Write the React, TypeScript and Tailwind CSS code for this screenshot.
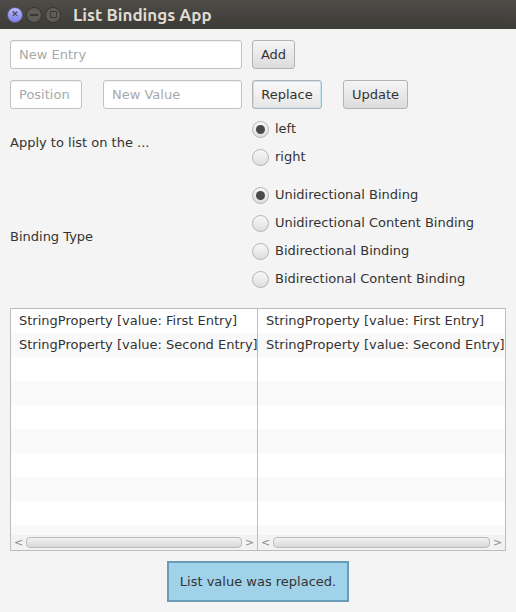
const rows = ["StringProperty [value: First Entry]", "StringProperty [value: Second Entry]"];

function Radio({ label, checked }: { label: string; checked?: boolean }) {
  return (
    <div className="flex h-[28px] items-center gap-[6px]">
      <div className="flex h-[17px] w-[17px] items-center justify-center rounded-full border border-[#b4b4b4] bg-gradient-to-b from-[#f8f8f8] to-[#dedede]">
        {checked && <div className="h-[9px] w-[9px] rounded-full bg-[#4a4a4a]" />}
      </div>
      <span>{label}</span>
    </div>
  );
}

function ListPane({ className }: { className: string }) {
  return (
    <div className={"flex h-full w-[248px] flex-col border border-[#bdbdbd] bg-white " + className}>
      <div className="flex-1 overflow-hidden">
        {Array.from({ length: 10 }).map((_, i) => (
          <div
            key={i}
            className={"h-[24px] overflow-hidden whitespace-nowrap pl-[8px] leading-[24px] " + (i % 2 ? "bg-[#f9f9f9]" : "bg-white")}
          >
            {rows[i] ?? ""}
          </div>
        ))}
      </div>
      <div className="flex h-[15px] items-center bg-[#f2f2f2] text-[#8a8a8a]">
        <span className="w-[15px] text-center text-[11px] leading-none">&lt;</span>
        <div className="h-[11px] flex-1 rounded-[4px] border border-[#bcbcbc] bg-gradient-to-b from-[#f2f2f2] to-[#d8d8d8]" />
        <span className="w-[15px] text-center text-[11px] leading-none">&gt;</span>
      </div>
    </div>
  );
}

const btn = "h-[29px] rounded-[3px] border border-[#b3b3b3] bg-gradient-to-b from-[#f5f5f5] to-[#dcdcdc] px-0 text-center";
const field = "h-[29px] rounded-[3px] border border-[#c2c2c2] bg-white px-[8px] shadow-[inset_0_1px_1px_rgba(0,0,0,0.06)] placeholder:text-[#a8a8a8] outline-none";

export default function App() {
  return (
    <div className="flex h-[612px] w-[516px] flex-col bg-[#f4f4f4] text-[13px] text-[#333] [font-family:'DejaVu_Sans',sans-serif]">
      <div className="flex h-[29px] items-center bg-gradient-to-b from-[#4d4c47] to-[#3c3b37] pl-[7px]">
        <div className="flex h-[16px] w-[16px] items-center justify-center rounded-full border border-[#5a5a8a] bg-gradient-to-b from-[#b8b8ff] to-[#8080e8] text-[9px] leading-none text-[#333]">
          ✕
        </div>
        <div className="ml-[3px] flex h-[16px] w-[16px] items-center justify-center rounded-full border border-[#35342f] bg-[#5d5c57]">
          <div className="h-[2px] w-[8px] bg-[#3a3935]" />
        </div>
        <div className="ml-[3px] flex h-[16px] w-[16px] items-center justify-center rounded-full border border-[#35342f] bg-[#5d5c57]">
          <div className="h-[7px] w-[7px] border border-[#3a3935]" />
        </div>
        <span className="ml-[12px] text-[17px] font-bold text-[#dfdbd2] [font-family:Ubuntu,'DejaVu_Sans',sans-serif]">
          List Bindings App
        </span>
      </div>

      <div className="flex flex-col px-[10px]">
        <div className="mt-[11px] flex gap-[10px]">
          <input className={field + " w-[232px]"} placeholder="New Entry" />
          <button className={btn + " w-[43px]"}>Add</button>
        </div>
        <div className="mt-[11px] flex">
          <input className={field + " w-[72px]"} placeholder="Position" />
          <input className={field + " ml-[21px] w-[139px]"} placeholder="New Value" />
          <button className={btn + " ml-[10px] w-[70px] border-[#3c9fd6] from-[#fafafa] to-[#e6e6e6] shadow-[inset_0_0_0_1px_#c4e2f2]"}>
            Replace
          </button>
          <button className={btn + " ml-[21px] w-[65px]"}>Update</button>
        </div>

        <div className="mt-[6px] flex items-center">
          <div className="w-[242px]">Apply to list on the ...</div>
          <div className="flex flex-col">
            <Radio label="left" checked />
            <Radio label="right" />
          </div>
        </div>

        <div className="mt-[10px] flex items-center">
          <div className="w-[242px]">Binding Type</div>
          <div className="flex flex-col">
            <Radio label="Unidirectional Binding" checked />
            <Radio label="Unidirectional Content Binding" />
            <Radio label="Bidirectional Binding" />
            <Radio label="Bidirectional Content Binding" />
          </div>
        </div>

        <div className="mt-[15px] flex h-[243px]">
          <ListPane className="" />
          <ListPane className="border-l-0" />
        </div>

        <div className="mt-[10px] flex justify-center">
          <div className="flex h-[41px] w-[182px] items-center justify-center border-2 border-[#6a9cb8] bg-[#a0d2ea]">
            List value was replaced.
          </div>
        </div>
      </div>
    </div>
  );
}
